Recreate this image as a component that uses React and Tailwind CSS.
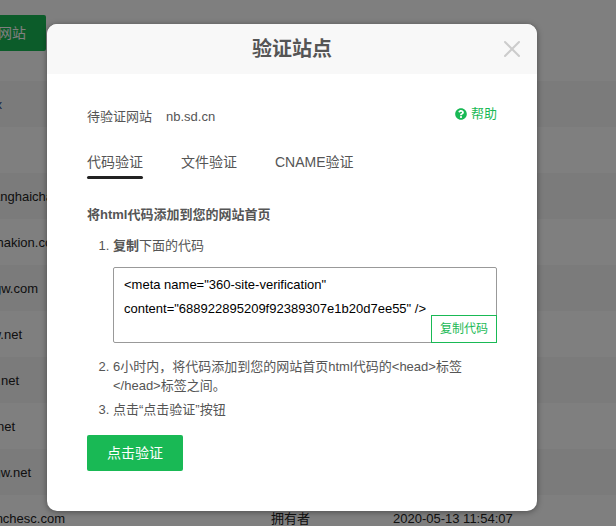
import { FaQuestionCircle } from 'react-icons/fa'

const META_CODE = '<meta name="360-site-verification" content="688922895209f92389307e1b20d7ee55" />'

const SITES = [
    { domain: 'x', width: 'w-[2px]', color: 'text-[#2a4a8c]' },
    { domain: '', width: 'w-[2px]' },
    { domain: 'anghaicha', width: 'w-[53px]' },
    { domain: 'hakion.com', width: 'w-[63px]' },
    { domain: 'gw.com', width: 'w-[38px]' },
    { domain: 'w.net', width: 'w-[22px]' },
    { domain: 'w.net', width: 'w-[19px]' },
    { domain: 'w.net', width: 'w-[15px]' },
    { domain: 'gw.net', width: 'w-[31px]' },
    { domain: 'nchesc.com', width: 'w-[65px]', role: '拥有者', time: '2020-05-13 11:54:07' },
]

const TABS = ['代码验证', '文件验证', 'CNAME验证']

function SiteTable() {
    return (
        <div className="pt-[15px] text-[13px] text-[#222]">
            <button type="button" className="flex h-9 w-[46px] items-center justify-end rounded-r-xs bg-[#19b955] pr-5 text-sm whitespace-nowrap text-white">
                添加网站
            </button>
            <table className="mt-[30px] w-full table-fixed border-collapse">
                <colgroup>
                    <col className="w-[271px]" />
                    <col className="w-[122px]" />
                    <col />
                </colgroup>
                <tbody>
                    {SITES.map((site, i) => (
                        <tr key={i} className="h-[46px] odd:bg-[#f6f6f6]">
                            <td className="pt-[2px]">
                                <div className={`flex justify-end whitespace-nowrap ${site.width} ${site.color || ''}`}>{site.domain}</div>
                            </td>
                            <td className="pt-[2px]">{site.role}</td>
                            <td className="pt-[2px]">{site.time}</td>
                        </tr>
                    ))}
                </tbody>
            </table>
        </div>
    )
}

function VerifyDialog() {
    return (
        <div role="dialog" aria-labelledby="verify-title" className="w-full overflow-hidden rounded-[10px] bg-white text-[13px] text-[#555] shadow-[0_1px_6px_rgba(0,0,0,0.4)]">
            <header className="grid h-[50px] grid-cols-[1fr_auto_1fr] items-center bg-[#f8f8f8] px-4">
                <h2 id="verify-title" className="col-start-2 text-xl font-bold">验证站点</h2>
                <button type="button" aria-label="关闭" className="justify-self-end text-[#ccc]">
                    <svg viewBox="0 0 18 18" className="block size-[18px]" fill="none" stroke="currentColor" strokeWidth="2" strokeLinecap="round">
                        <path d="M2 2l14 14M16 2L2 16" />
                    </svg>
                </button>
            </header>

            <div className="px-10 pt-[30px] pb-10">
                <div className="flex justify-between leading-5">
                    <p className="flex gap-[14px] pt-[3px]">
                        <span>待验证网站</span>
                        <span>nb.sd.cn</span>
                    </p>
                    <a href="#help" className="flex items-center gap-1 self-start text-[#19b955]">
                        <FaQuestionCircle className="size-3" />
                        帮助
                    </a>
                </div>

                <div role="tablist" className="mt-[25px] flex gap-[38px] text-sm">
                    {TABS.map((tab, i) => (
                        <button
                            key={tab}
                            type="button"
                            role="tab"
                            aria-selected={i === 0}
                            className="flex flex-col gap-1 leading-5 after:h-[3px] after:w-full after:rounded-full aria-selected:after:bg-[#222]"
                        >
                            {tab}
                        </button>
                    ))}
                </div>

                <h3 className="mt-[26px] leading-5 font-bold">将html代码添加到您的网站首页</h3>

                <ol className="mt-[11px] flex list-decimal flex-col gap-[5px] pl-[26px] leading-[19px]">
                    <li>
                        <label htmlFor="meta-code"><b>复制</b>下面的代码</label>
                        <div className="relative mt-3 mb-[9px]">
                            <textarea
                                id="meta-code"
                                readOnly
                                defaultValue={META_CODE}
                                className="block h-[76px] w-full resize-none rounded-xs border border-[#999] px-[10px] py-[5px] leading-6 text-black"
                            />
                            <button type="button" className="absolute right-0 bottom-0 h-7 border border-[#19b955] bg-white px-2 text-xs text-[#19b955]">
                                复制代码
                            </button>
                        </div>
                    </li>
                    <li>6小时内，将代码添加到您的网站首页html代码的&lt;head&gt;标签&lt;/head&gt;标签之间。</li>
                    <li>点击“点击验证”按钮</li>
                </ol>

                <button type="button" className="mt-4 h-9 rounded-xs bg-[#19b955] px-5 text-sm text-white">点击验证</button>
            </div>
        </div>
    )
}

export default function App() {
    return (
        <div className="relative h-screen overflow-hidden bg-white font-['Liberation_Sans','Noto_Sans_CJK_SC',sans-serif]">
            <SiteTable />
            <div className="absolute inset-0 bg-black/50 pt-6 pr-[79px] pl-[47px]">
                <VerifyDialog />
            </div>
        </div>
    )
}
